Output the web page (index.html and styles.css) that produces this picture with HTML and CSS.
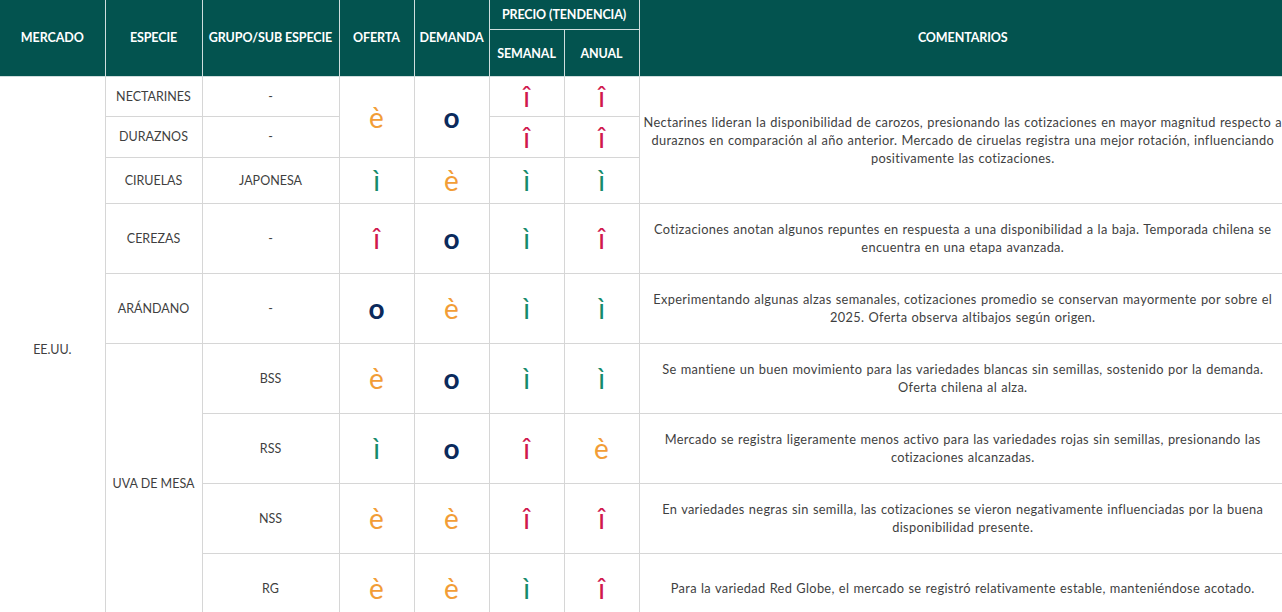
FILE: index.html
```html
<!DOCTYPE html>
<html lang="es">
<head>
<meta charset="utf-8">
<title>Mercado EE.UU.</title>
<link rel="stylesheet" href="styles.css">
</head>
<body>
<table class="grid">
  <colgroup>
    <col class="c-mercado"><col class="c-especie"><col class="c-grupo"><col class="c-sym"><col class="c-sym"><col class="c-sym"><col class="c-sym"><col class="c-com">
  </colgroup>
  <thead>
    <tr class="h1">
      <th rowspan="2">MERCADO</th>
      <th rowspan="2">ESPECIE</th>
      <th rowspan="2">GRUPO/SUB ESPECIE</th>
      <th rowspan="2">OFERTA</th>
      <th rowspan="2">DEMANDA</th>
      <th colspan="2">PRECIO (TENDENCIA)</th>
      <th rowspan="2" class="com-h">COMENTARIOS</th>
    </tr>
    <tr class="h2">
      <th>SEMANAL</th>
      <th>ANUAL</th>
    </tr>
  </thead>
  <tbody>
    <tr class="r40">
      <td rowspan="9" class="mercado">EE.UU.</td>
      <td>NECTARINES</td>
      <td>-</td>
      <td rowspan="2" class="sym"><span class="eq">è</span></td>
      <td rowspan="2" class="sym"><span class="st">o</span></td>
      <td class="sym"><span class="up">î</span></td>
      <td class="sym"><span class="up">î</span></td>
      <td rowspan="3" class="com">Nectarines lideran la disponibilidad de carozos, presionando las cotizaciones en mayor magnitud respecto a duraznos en comparación al año anterior. Mercado de ciruelas registra una mejor rotación, influenciando positivamente las cotizaciones.</td>
    </tr>
    <tr class="r41">
      <td>DURAZNOS</td>
      <td>-</td>
      <td class="sym"><span class="up">î</span></td>
      <td class="sym"><span class="up">î</span></td>
    </tr>
    <tr class="r47">
      <td>CIRUELAS</td>
      <td>JAPONESA</td>
      <td class="sym"><span class="dn">ì</span></td>
      <td class="sym"><span class="eq">è</span></td>
      <td class="sym"><span class="dn">ì</span></td>
      <td class="sym"><span class="dn">ì</span></td>
    </tr>
    <tr class="r70">
      <td>CEREZAS</td>
      <td>-</td>
      <td class="sym"><span class="up">î</span></td>
      <td class="sym"><span class="st">o</span></td>
      <td class="sym"><span class="dn">ì</span></td>
      <td class="sym"><span class="up">î</span></td>
      <td class="com">Cotizaciones anotan algunos repuntes en respuesta a una disponibilidad a la baja. Temporada chilena se encuentra en una etapa avanzada.</td>
    </tr>
    <tr class="r70">
      <td>ARÁNDANO</td>
      <td>-</td>
      <td class="sym"><span class="st">o</span></td>
      <td class="sym"><span class="eq">è</span></td>
      <td class="sym"><span class="dn">ì</span></td>
      <td class="sym"><span class="dn">ì</span></td>
      <td class="com">Experimentando algunas alzas semanales, cotizaciones promedio se conservan mayormente por sobre el 2025. Oferta observa altibajos según origen.</td>
    </tr>
    <tr class="r70">
      <td rowspan="4">UVA DE MESA</td>
      <td>BSS</td>
      <td class="sym"><span class="eq">è</span></td>
      <td class="sym"><span class="st">o</span></td>
      <td class="sym"><span class="dn">ì</span></td>
      <td class="sym"><span class="dn">ì</span></td>
      <td class="com">Se mantiene un buen movimiento para las variedades blancas sin semillas, sostenido por la demanda. Oferta chilena al alza.</td>
    </tr>
    <tr class="r70">
      <td>RSS</td>
      <td class="sym"><span class="dn">ì</span></td>
      <td class="sym"><span class="st">o</span></td>
      <td class="sym"><span class="up">î</span></td>
      <td class="sym"><span class="eq">è</span></td>
      <td class="com">Mercado se registra ligeramente menos activo para las variedades rojas sin semillas, presionando las cotizaciones alcanzadas.</td>
    </tr>
    <tr class="r70">
      <td>NSS</td>
      <td class="sym"><span class="eq">è</span></td>
      <td class="sym"><span class="eq">è</span></td>
      <td class="sym"><span class="up">î</span></td>
      <td class="sym"><span class="up">î</span></td>
      <td class="com">En variedades negras sin semilla, las cotizaciones se vieron negativamente influenciadas por la buena disponibilidad presente.</td>
    </tr>
    <tr class="r70">
      <td>RG</td>
      <td class="sym"><span class="eq">è</span></td>
      <td class="sym"><span class="eq">è</span></td>
      <td class="sym"><span class="dn">ì</span></td>
      <td class="sym"><span class="up">î</span></td>
      <td class="com">Para la variedad Red Globe, el mercado se registró relativamente estable, manteniéndose acotado.</td>
    </tr>
  </tbody>
</table>
</body>
</html>
```

FILE: styles.css
```css
html, body {
  margin: 0;
  padding: 0;
  overflow: hidden;
  background: #ffffff;
}

.grid {
  border-collapse: collapse;
  table-layout: fixed;
  width: 1286px;
  font-family: Lato, "Open Sans", sans-serif;
  color: #3f3f3f;
}

.c-mercado { width: 105px; }
.c-especie { width: 97px; }
.c-grupo { width: 137px; }
.c-sym { width: 75px; }
.c-com { width: auto; }

.grid th {
  background: #03534f;
  color: #ffffff;
  font-weight: 700;
  font-size: 12.5px;
  letter-spacing: -0.1px;
  text-align: center;
  vertical-align: middle;
  padding: 0 2px;
  border: 1px solid #cfdddd;
  border-top: none;
  white-space: nowrap;
}

.grid th:first-child { border-left: none; }
.grid th.com-h { border-right: none; }

.h1 { height: 29px; }
.h2 { height: 47px; }
.h2 th { padding-top: 2px; }

.grid td {
  font-size: 12.5px;
  text-align: center;
  vertical-align: middle;
  padding: 0 4px;
  border: 1px solid #d6d6d6;
}

.grid td.mercado {
  border-left: none;
  border-bottom: none;
}

.grid td.com {
  font-size: 12.8px;
  line-height: 18px;
  letter-spacing: 0.32px;
  word-spacing: 0.6px;
  padding: 0 2px;
  border-right: none;
}

.r40 { height: 40px; }
.r41 { height: 41px; }
.r47 { height: 46px; }
.r70 { height: 70px; }

.sym span {
  font-family: Lato, "Open Sans", sans-serif;
  font-size: 28px;
  line-height: 28px;
  display: inline-block;
}

.eq { color: #f29d36; }
.up { color: #d0184c; }
.dn { color: #168a6a; }
.st { color: #0b2a5c; font-weight: 700; }
```
